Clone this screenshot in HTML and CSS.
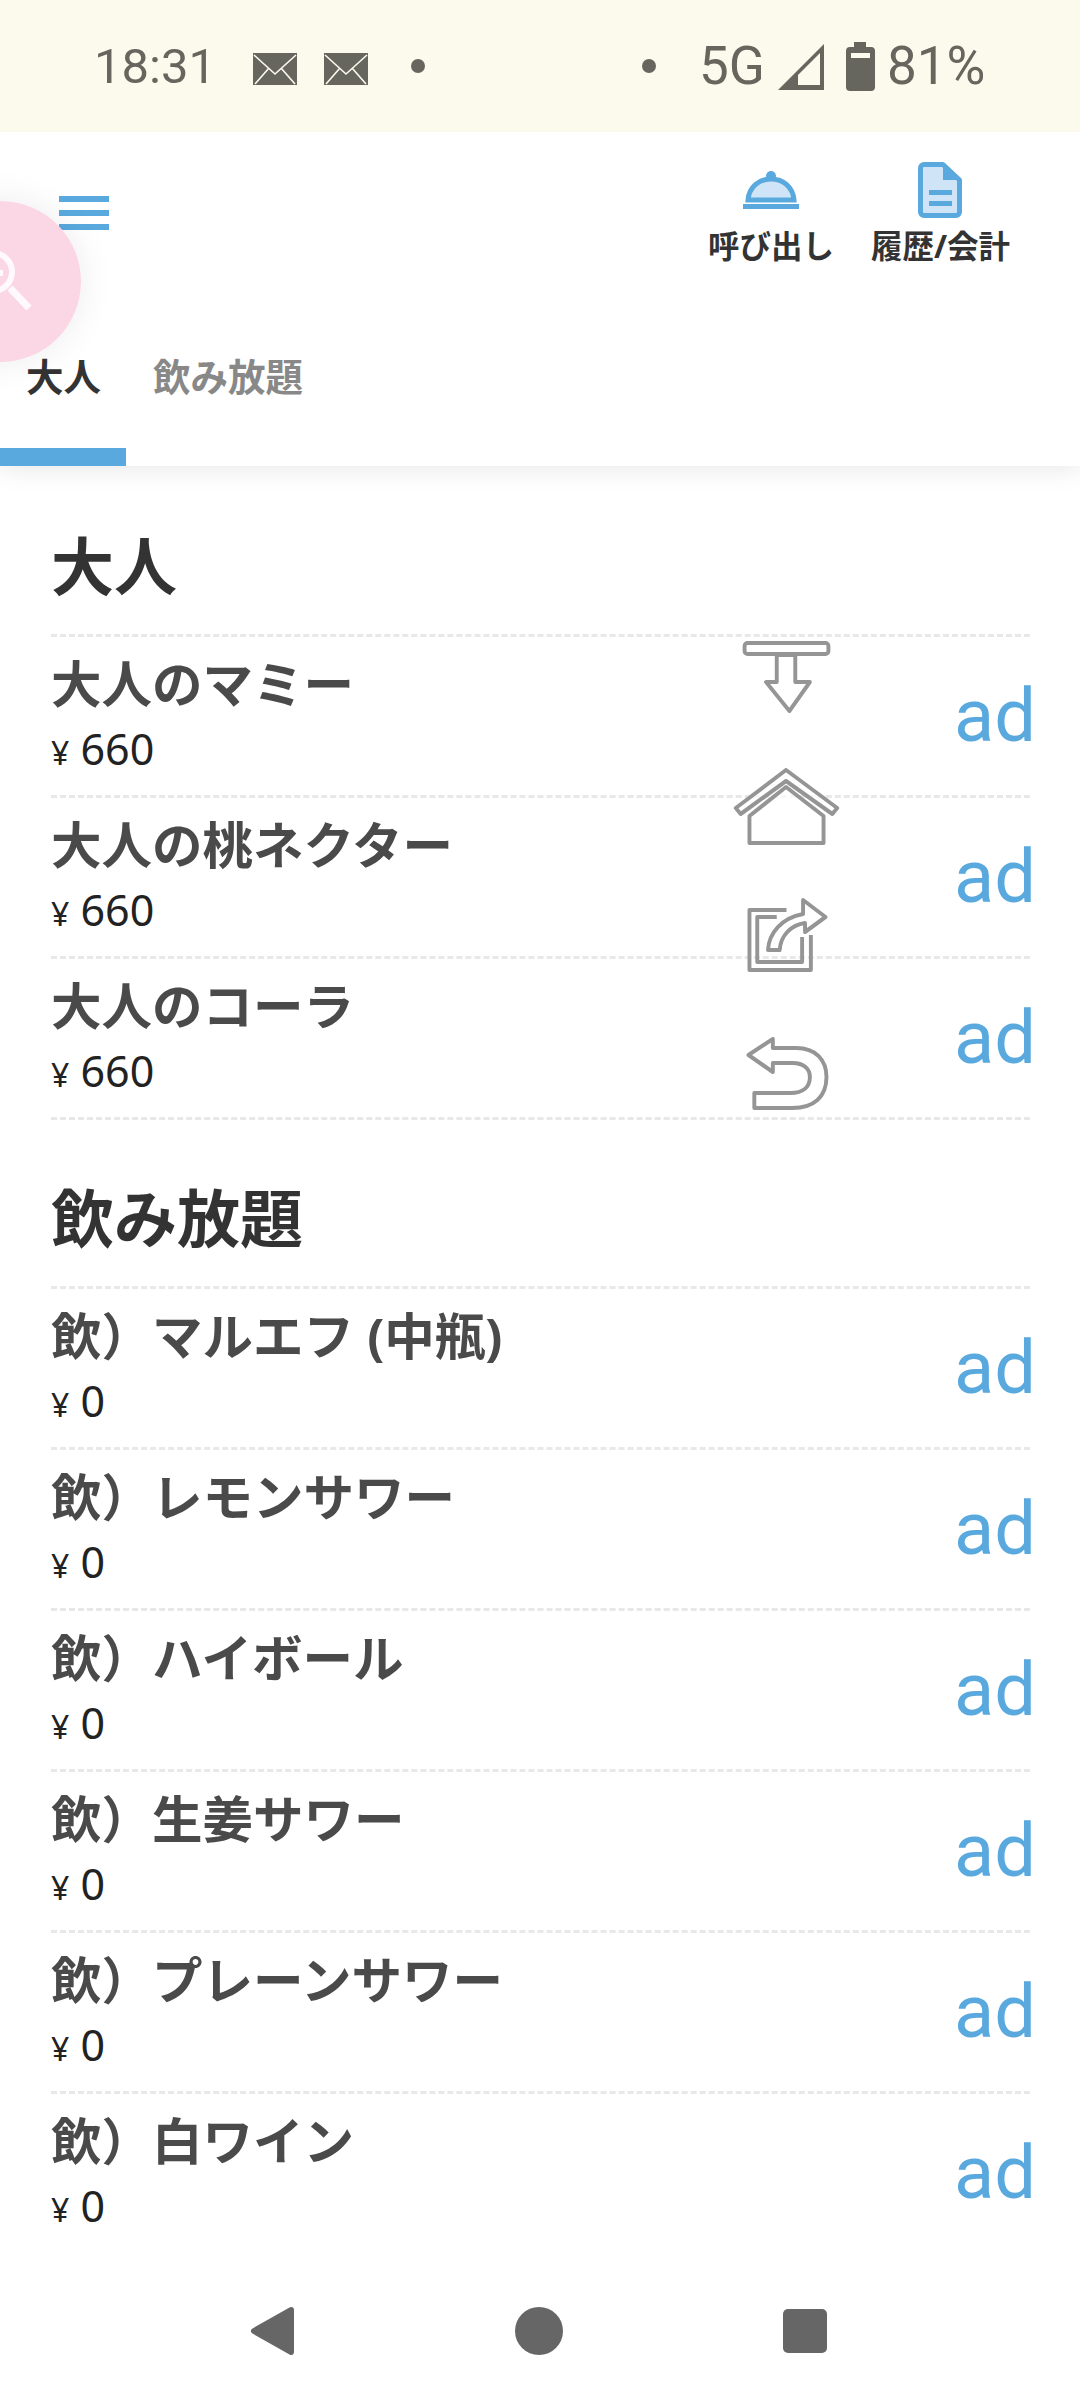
FILE: index.html
```html
<!DOCTYPE html>
<html lang="ja">
<head>
<meta charset="utf-8">
<title>メニュー</title>
<link rel="stylesheet" href="styles.css">
</head>
<body>
<div class="page">
  <div class="status">
    <span class="clock">18:31</span>
    <svg class="env env-first" viewBox="0 0 44 32"><rect width="44" height="32" fill="#66665f"/><path d="M1 2 22 21 43 2M2 31 16 15M42 31 28 15" fill="none" stroke="#fcfaed" stroke-width="1.600"/></svg>
    <svg class="env env-second" viewBox="0 0 44 32"><rect width="44" height="32" fill="#66665f"/><path d="M1 2 22 21 43 2M2 31 16 15M42 31 28 15" fill="none" stroke="#fcfaed" stroke-width="1.600"/></svg>
    <i class="dot dot-left"></i>
    <i class="dot dot-right"></i>
    <span class="net">5G</span>
    <svg class="signal" viewBox="0 0 46 46"><path d="M0 46 46 0V46ZM20 41H42V9L20 31Z" fill="#66665f" fill-rule="evenodd"/></svg>
    <svg class="battery" viewBox="0 0 29 49"><path d="M8 0h12v5h5a4 4 0 0 1 4 4v36a4 4 0 0 1-4 4H4a4 4 0 0 1-4-4V9a4 4 0 0 1 4-4h4Z" fill="#66665f"/><rect x="5" y="11" width="19" height="5" fill="#fcfaed"/></svg>
    <span class="pct">81%</span>
  </div>

  <header class="head">
    <div class="head-top">
      <div class="burger"><i></i><i></i><i></i></div>
      <div class="actions">
        <div class="action action-call">
          <svg class="bell" viewBox="0 0 56 38"><circle cx="28" cy="5" r="5" fill="#5aa9de"/><path d="M5 29C6 16 16 8 28 8s22 8 23 21Z" fill="#cfe4f6" stroke="#5aa9de" stroke-width="5"/><rect y="33" width="56" height="5" fill="#5aa9de"/></svg>
          <span>呼び出し</span>
        </div>
        <div class="action action-bill">
          <svg class="doc" viewBox="0 0 44 56"><path d="M6 2.500H25L41.500 18V50a3.500 3.500 0 0 1-3.500 3.500H6A3.500 3.500 0 0 1 2.500 50V6A3.500 3.500 0 0 1 6 2.500Z" fill="#cfe4f6" stroke="#5aa9de" stroke-width="5" stroke-linejoin="round"/><path d="M25 2 42 18H25Z" fill="#5aa9de"/><path d="M11 28h23v5H11ZM11 39h23v5H11Z" fill="#5aa9de"/></svg>
          <span>履歴/会計</span>
        </div>
      </div>
    </div>
    <nav class="tabs">
      <span class="tab tab-on">大人</span>
      <span class="tab">飲み放題</span>
    </nav>
  </header>

  <div class="fab">
    <svg class="fab-icon" viewBox="0 0 80 80"><circle cx="27" cy="31" r="19" fill="none" stroke="#fff" stroke-opacity=".85" stroke-width="6"/><path d="M44 47 63 67" stroke="#fff" stroke-opacity=".85" stroke-width="7"/><rect x="33" y="29" width="4" height="6" fill="#fff" fill-opacity=".85"/></svg>
  </div>

  <main class="menu">
    <section>
      <h2 class="sec-title">大人</h2>
      <div class="row"><div class="info"><div class="name">大人のマミー</div><div class="price"><span class="yen">¥</span> 660</div></div><span class="add">ad</span></div>
      <div class="row"><div class="info"><div class="name">大人の桃ネクター</div><div class="price"><span class="yen">¥</span> 660</div></div><span class="add">ad</span></div>
      <div class="row"><div class="info"><div class="name">大人のコーラ</div><div class="price"><span class="yen">¥</span> 660</div></div><span class="add">ad</span></div>
    </section>
    <section>
      <h2 class="sec-title">飲み放題</h2>
      <div class="row"><div class="info"><div class="name">飲）マルエフ (中瓶)</div><div class="price"><span class="yen">¥</span> 0</div></div><span class="add">ad</span></div>
      <div class="row"><div class="info"><div class="name">飲）レモンサワー</div><div class="price"><span class="yen">¥</span> 0</div></div><span class="add">ad</span></div>
      <div class="row"><div class="info"><div class="name">飲）ハイボール</div><div class="price"><span class="yen">¥</span> 0</div></div><span class="add">ad</span></div>
      <div class="row"><div class="info"><div class="name">飲）生姜サワー</div><div class="price"><span class="yen">¥</span> 0</div></div><span class="add">ad</span></div>
      <div class="row"><div class="info"><div class="name">飲）プレーンサワー</div><div class="price"><span class="yen">¥</span> 0</div></div><span class="add">ad</span></div>
      <div class="row"><div class="info"><div class="name">飲）白ワイン</div><div class="price"><span class="yen">¥</span> 0</div></div><span class="add">ad</span></div>
    </section>
  </main>

  <div class="float-nav">
    <svg class="fn fn-top" viewBox="0 0 120 130" preserveAspectRatio="none"><rect x="17" y="13" width="86" height="11" rx="3"/><path d="M50 25H69V52H84L63 81 39 52H50Z"/></svg>
    <svg class="fn fn-home" viewBox="0 0 120 125" preserveAspectRatio="none"><path d="M59.500 10 112 48 107 54 59.500 21 13 54 8 48Z"/><path d="M22 56 59.500 27 98 56V83H22Z"/></svg>
    <svg class="fn fn-share" viewBox="0 0 120 140" preserveAspectRatio="none"><path class="open" d="M60 25H22V85H85V50"/><path class="open" d="M50 32H30V77H76V52"/><path d="M41 65C42 48 55 33 77 29V15L100 32 79 47V38C65 40 54 50 53 65Z"/></svg>
    <svg class="fn fn-back" viewBox="0 0 120 95" preserveAspectRatio="none"><path d="M21 30 46 14V23H70C90 23 101 35 101 52 101 72 88 83 66 83H27V68H64C77 68 84 62 84 52 84 44 78 38 66 38H46V47Z"/></svg>
  </div>

  <footer class="sysnav">
    <svg class="sys sys-back" viewBox="0 0 45 48"><path d="M41 3 4 24 41 45Z" fill="#666" stroke="#666" stroke-width="6" stroke-linejoin="round"/></svg>
    <i class="sys-home"></i>
    <i class="sys-recent"></i>
  </footer>
</div>
</body>
</html>
```
FILE: styles.css
```css
* { box-sizing: border-box; }
html, body { margin: 0; padding: 0; }
body { font-family: "Noto Sans", "Noto Sans CJK JP", sans-serif; background: #fff; }
.page { position: relative; width: 1080px; height: 2400px; overflow: hidden; display: flex; flex-direction: column; }

.status { height: 132px; flex: none; background: #fcfaed; display: flex; align-items: center; padding-left: 94px; color: #66665f; font-family: Roboto, sans-serif; font-size: 49px; font-weight: 450; position: relative; z-index: 3; }
.clock { width: 159px; }
.env { width: 44px; height: 32px; flex: none; margin-top: 5px; }
.env-second { margin-left: 27px; }
.dot { width: 14px; height: 14px; border-radius: 50%; background: #66665f; flex: none; }
.dot-left { margin-left: 43px; }
.dot-right { margin-left: 217px; }
.net { margin-left: 43px; width: 79px; font-size: 53px; }
.signal { width: 46px; height: 46px; flex: none; margin-top: 2px; }
.battery { width: 29px; height: 49px; flex: none; margin-left: 22px; }
.pct { margin-left: 12px; font-size: 53px; }

.head { height: 334px; flex: none; background: #fff; box-shadow: 0 4px 24px rgba(0,0,0,.09); position: relative; z-index: 2; display: flex; flex-direction: column; }
.head-top { height: 212px; display: flex; justify-content: space-between; padding: 30px 70px 0 59px; }
.burger { width: 50px; height: 34px; margin-top: 34px; display: flex; flex-direction: column; justify-content: space-between; }
.burger i { display: block; height: 6px; background: #5aa9de; }
.actions { display: flex; gap: 37px; }
.action { display: flex; flex-direction: column; align-items: center; font-size: 31.500px; font-weight: 700; color: #333; line-height: 42px; }
.action svg { display: block; }
.bell { width: 56px; height: 38px; margin-top: 9px; margin-bottom: 16px; }
.doc { width: 44px; height: 56px; margin-bottom: 7px; }
.tabs { display: flex; height: 122px; }
.tab { padding: 0 26px 0 27px; font-size: 37.500px; font-weight: 700; color: #888; height: 122px; line-height: 66px; }
.tab-on { color: #333; padding: 0 25px 0 26px; border-bottom: 18px solid #5aa9de; }

.fab { position: absolute; left: -80px; top: 201px; width: 161px; height: 161px; border-radius: 50%; background: rgba(251,212,227,.93); box-shadow: 0 0 36px rgba(0,0,0,.08); z-index: 3; }
.fab-icon { position: absolute; left: 46px; top: 40px; width: 80px; height: 80px; }

.menu { flex: 1; min-height: 0; overflow: hidden; padding: 2px 50px 0 51px; }
.sec-title { margin: 0; height: 169px; padding-top: 58px; font-size: 63px; font-weight: 700; line-height: 80px; color: #333; border-bottom: 3px dashed #e8e8e8; }
.row { height: 161px; border-bottom: 3px dashed #e8e8e8; display: flex; justify-content: space-between; }
.info { padding-top: 12px; }
.name { font-size: 50.500px; font-weight: 700; line-height: 70px; color: #4a4a4a; }
.price { font-size: 43px; line-height: 60px; color: #222; }
.yen { font-size: 32px; }
.add { font-family: Roboto, sans-serif; font-size: 74px; line-height: 90px; color: #5aa9de; padding-top: 34px; margin-right: -6px; white-space: nowrap; }

.float-nav { position: absolute; left: 728px; top: 630px; width: 117px; display: flex; flex-direction: column; z-index: 4; }
.fn { display: block; width: 117px; fill: rgba(255,255,255,.7); stroke: #959595; stroke-width: 4; stroke-linejoin: round; filter: blur(.6px); }
.fn .open { fill: none; }
.fn-top { height: 130px; }
.fn-home { height: 125px; }
.fn-share { height: 140px; }
.fn-back { height: 95px; }

.sysnav { height: 148px; flex: none; background: #fff; display: flex; align-items: flex-start; padding: 55px 0 0 250px; }
.sys-back { width: 45px; height: 48px; flex: none; }
.sys-home { width: 48px; height: 48px; border-radius: 50%; background: #666; margin-left: 220px; flex: none; }
.sys-recent { width: 44px; height: 44px; border-radius: 5px; background: #666; margin: 2px 0 0 220px; flex: none; }
```
